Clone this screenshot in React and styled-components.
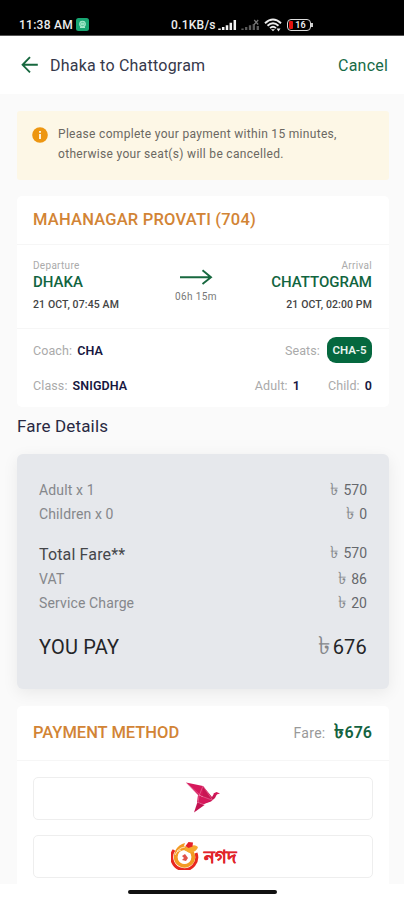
import styled, { createGlobalStyle } from 'styled-components'
import React from 'react'

const App = () => {
  return (
    <Screen>
      <GlobalStyle />
      <StatusBar>
        <Clock>11:38 AM</Clock>
        <AppBadge viewBox="0 0 13 13">
          <rect width="13" height="13" rx="2.5" fill="#18a572" />
          <circle cx="6.5" cy="6" r="2.8" fill="#5cc79d" stroke="#a5e8cb" strokeWidth="1.1" />
          <path d="M4 9.5h5M5 5l3 2M8 5L5 7" stroke="#a5e8cb" strokeWidth="1" />
        </AppBadge>
        <Speed>0.1KB/s</Speed>
        <Signal viewBox="0 0 19 12">
          <path d="M1.5 11v-1.5M5.2 11v-3M9 11V6.3M12.8 11V3.8M16.8 11V1" stroke="#f4f4f4" strokeWidth="2.5" />
        </Signal>
        <Signal $gap="4px" viewBox="0 0 19 12">
          <path d="M1.5 11v-1.5M5.2 11v-3M9 11V6.3M12.8 11V5M16.8 11V7" stroke="#5c5c5c" strokeWidth="2.3" />
          <path d="M13.2 1l4 4.5M17.2 1l-4 4.5" stroke="#777" strokeWidth="1.2" />
        </Signal>
        <Wifi viewBox="0 0 18 14">
          <path d="M1 5.2Q9-2.2 17 5.2M3.5 7.7q5.5-4.8 11 0M6 10.1q3-2.6 6 0" fill="none" stroke="#ececec" strokeWidth="1.9" />
          <path d="M7 11.200h4l-2 2zM12.500 10.500h4l-2 3z" fill="#ececec" />
        </Wifi>
        <Battery>
          <BatteryLevel />
          16
        </Battery>
        <BatteryTip />
      </StatusBar>

      <Header>
        <BackArrow viewBox="0 0 18 18">
          <path d="M16.8 8.8H2M9 1.2L1.6 8.8 9 16.300" />
        </BackArrow>
        <Route>Dhaka to Chattogram</Route>
        <Cancel>Cancel</Cancel>
      </Header>

      <Body>
        <Notice>
          <InfoIcon viewBox="0 0 16 16">
            <circle cx="8" cy="8" r="7.8" fill="#ed9611" />
            <path d="M8 7v5M8 4v1.7" stroke="#fff" strokeWidth="1.7" />
          </InfoIcon>
          <NoticeText>
            Please complete your payment within 15 minutes,
            <br />
            otherwise your seat(s) will be cancelled.
          </NoticeText>
        </Notice>

        <TicketCard>
          <CardHead $height="49px">
            <CardTitle $ls="0.21px">MAHANAGAR PROVATI (704)</CardTitle>
          </CardHead>
          <Journey>
            <Stop>
              <StopLabel>Departure</StopLabel>
              <City>DHAKA</City>
              <StopTime>21 OCT, 07:45 AM</StopTime>
            </Stop>
            <Duration>
              <LongArrow viewBox="0 0 34 16">
                <path d="M1 8.3h31M23.500 1.2l8.500 7.100-8.500 6.700" />
              </LongArrow>
              06h 15m
            </Duration>
            <Stop $right>
              <StopLabel>Arrival</StopLabel>
              <City>CHATTOGRAM</City>
              <StopTime>21 OCT, 02:00 PM</StopTime>
            </Stop>
          </Journey>
          <Details>
            <DetailRow $height="36px">
              <Detail>Coach: <b>CHA</b></Detail>
              <Detail>Seats: <Seat>CHA-5</Seat></Detail>
            </DetailRow>
            <DetailRow $height="34px">
              <Detail>Class: <b>SNIGDHA</b></Detail>
              <Passengers>
                <Detail>Adult: <b>1</b></Detail>
                <Detail>Child: <b>0</b></Detail>
              </Passengers>
            </DetailRow>
          </Details>
        </TicketCard>

        <SectionTitle>Fare Details</SectionTitle>

        <FareBox>
          <FareRow>
            <FareLabel>Adult x 1</FareLabel>
            <Amount><Taka>৳</Taka>570</Amount>
          </FareRow>
          <FareRow>
            <FareLabel>Children x 0</FareLabel>
            <Amount><Taka>৳</Taka>0</Amount>
          </FareRow>
          <FareRow $top="15px" $height="26px">
            <TotalLabel>Total Fare**</TotalLabel>
            <Amount $lift><Taka>৳</Taka>570</Amount>
          </FareRow>
          <FareRow>
            <FareLabel>VAT</FareLabel>
            <Amount><Taka>৳</Taka>86</Amount>
          </FareRow>
          <FareRow>
            <FareLabel>Service Charge</FareLabel>
            <Amount><Taka>৳</Taka>20</Amount>
          </FareRow>
          <FareRow $top="17px" $height="30px">
            <PayLabel>YOU PAY</PayLabel>
            <PayLabel><Taka $size="25px" $gap="2px">৳</Taka>676</PayLabel>
          </FareRow>
        </FareBox>

        <PaymentCard>
          <CardHead $height="55px">
            <CardTitle>PAYMENT METHOD</CardTitle>
            <PayFare>
              Fare:
              <PayTotal><Taka $bold $size="20px" $gap="1px">৳</Taka>676</PayTotal>
            </PayFare>
          </CardHead>
          <Methods>
            <Method>
              <BkashLogo viewBox="0 0 34 31">
                <path fill="#d6185b" d="M0 .5L17 4l9.500 13.500L12 13z" />
                <path fill="#c91553" d="M17 4l9 11 2-3.500 3.500-.5-2.500 5-4 3.500-8.500 3z" />
                <path fill="#d6185b" d="M12 13l14 5-9.500 4.500L11 20z" />
                <path fill="#d6185b" d="M27.500 11.500l3-1.500 3.500 1.500-5 1.500z" />
                <path fill="#c21150" d="M11.500 20l7 3L8 30.500z" />
                <path d="M0 .5L15 14l11 4M17 4l-4 10-1 6.500 7 2.500M17 4l9.500 14" fill="none" stroke="#f3a6c2" strokeWidth=".4" />
              </BkashLogo>
            </Method>
            <Method>
              <NagadMark viewBox="0 0 28 28">
                <path d="M3 8a12.500 12.500 0 1 0 22 3" fill="none" stroke="#e8281f" strokeWidth="3" />
                <circle cx="13.500" cy="15" r="8.800" fill="none" stroke="#f39a24" strokeWidth="3.800" />
                <path d="M4 9Q8 2 14 1q-2 4-1 7-5 0-8 4z" fill="#f39a24" />
                <path d="M13 8q4-6 7-4 4-2 7 1-1 5-9 6z" fill="#f6a92e" />
                <path d="M14.500 4l3-4 4.500.5-.5 4-4 1.500z" fill="#e5202a" />
                <path d="M6 9q4-4 8-4M4 13q1-4 6-5" fill="none" stroke="#fff3dc" strokeWidth=".8" />
                <circle cx="13.500" cy="15.500" r="6.200" fill="#fff" />
                <path d="M11 14l3-2 3 4-2 3-4-1 2-2z" fill="#e0524a" />
              </NagadMark>
              <NagadName>নগদ</NagadName>
            </Method>
          </Methods>
        </PaymentCard>
      </Body>

      <NavBar>
        <HomePill />
      </NavBar>
    </Screen>
  )
}

const GlobalStyle = createGlobalStyle`
  * {
    box-sizing: border-box;
  }
  body {
    margin: 0;
    background: #fff;
    font-family: Roboto, "Noto Sans", sans-serif;
  }
  b {
    font-weight: 600;
  }
  svg {
    display: block;
    flex: none;
  }
`

const Screen = styled.div`
  display: flex;
  flex-direction: column;
  width: 404px;
  height: 900px;
  overflow: hidden;
  white-space: nowrap;
`

const StatusBar = styled.div`
  display: flex;
  align-items: center;
  height: 36px;
  flex: none;
  padding: 14px 0 0 19px;
  background: #000;
  border-bottom: 1px solid #555;
  color: #eee;
`

const Clock = styled.div`
  width: 57px;
  font-size: 12px;
  font-weight: 500;
  letter-spacing: 0.25px;
`

const AppBadge = styled.svg`
  width: 13px;
  height: 13px;
`

const Speed = styled.div`
  width: 47px;
  margin-left: 82px;
  font-size: 12px;
  font-weight: 500;
  letter-spacing: 0.25px;
`

const Signal = styled.svg`
  width: 19px;
  height: 12px;
  margin-left: ${props => props.$gap || '0'};
`

const Wifi = styled.svg`
  width: 18px;
  height: 14px;
  margin-left: 4px;
`

const Battery = styled.div`
  position: relative;
  width: 24px;
  height: 12px;
  margin-left: 5px;
  padding-left: 3px;
  border: 1.5px solid #ddd;
  border-radius: 4px;
  font-size: 9px;
  line-height: 10px;
  font-weight: 600;
  text-align: center;
`

const BatteryLevel = styled.div`
  position: absolute;
  left: 1px;
  top: 1px;
  width: 4px;
  height: 8px;
  border-radius: 1px;
  background: #e3130f;
`

const BatteryTip = styled.div`
  width: 2px;
  height: 4px;
  background: #ccc;
`

const Header = styled.header`
  display: flex;
  align-items: center;
  height: 58px;
  flex: none;
  padding: 0 16px 0 21px;
  background: #fff;
`

const BackArrow = styled.svg`
  width: 18px;
  height: 18px;
  fill: none;
  stroke: #17683f;
  stroke-width: 1.9;
`

const Route = styled.div`
  flex: 1;
  margin-left: 11px;
  font-size: 16px;
  letter-spacing: 0.22px;
  color: #35384a;
`

const Cancel = styled.div`
  font-size: 16px;
  letter-spacing: 0.2px;
  color: #176b47;
`

const Body = styled.main`
  height: 790px;
  flex: none;
  padding: 17px 15px 0 17px;
  background: #fafafa;
  overflow: hidden;
`

const Notice = styled.div`
  display: flex;
  height: 69px;
  padding: 13px 15px;
  border-radius: 3px;
  background: #fdf7e6;
`

const InfoIcon = styled.svg`
  width: 16px;
  height: 16px;
  margin-top: 3px;
`

const NoticeText = styled.div`
  margin-left: 10px;
  font-size: 12px;
  line-height: 20px;
  letter-spacing: 0.31px;
  color: #6b6862;
`

const TicketCard = styled.section`
  height: 211px;
  margin-top: 16px;
  border-radius: 5px;
  background: #fff;
`

const CardHead = styled.div`
  display: flex;
  align-items: center;
  justify-content: space-between;
  height: ${props => props.$height};
  padding: 0 17px 1px 16px;
  border-bottom: 1px solid #f6f6f6;
`

const CardTitle = styled.h2`
  margin: 0;
  font-size: 16.5px;
  font-weight: 500;
  letter-spacing: ${props => props.$ls || '0'};
  color: #d28435;
`

const Journey = styled.div`
  display: flex;
  justify-content: space-between;
  height: 84px;
  padding: 14px 17px 0 16px;
  border-bottom: 1px solid #f6f6f6;
`

const Stop = styled.div`
  width: 120px;
  text-align: ${props => (props.$right ? 'right' : 'left')};
`

const StopLabel = styled.div`
  font-size: 10px;
  line-height: 14px;
  letter-spacing: 0.3px;
  color: #aaa;
`

const City = styled.div`
  font-size: 15px;
  line-height: 18px;
  font-weight: 500;
  color: #11653f;
`

const StopTime = styled.div`
  margin-top: 7px;
  font-size: 10.5px;
  line-height: 14px;
  font-weight: 500;
  letter-spacing: 0.12px;
  color: #444;
`

const Duration = styled.div`
  display: flex;
  flex-direction: column;
  align-items: center;
  margin-right: 13px;
  padding-top: 10px;
  font-size: 10px;
  line-height: 12px;
  letter-spacing: 0.4px;
  color: #777;
`

const LongArrow = styled.svg`
  width: 34px;
  height: 16px;
  margin-bottom: 6px;
  fill: none;
  stroke: #17683f;
  stroke-width: 1.9;
`

const Details = styled.div`
  padding: 3px 17px 0 16px;
`

const DetailRow = styled.div`
  display: flex;
  align-items: center;
  justify-content: space-between;
  height: ${props => props.$height};
`

const Detail = styled.div`
  display: flex;
  align-items: center;
  gap: 5px;
  font-size: 12.5px;
  letter-spacing: 0.1px;
  color: #aaa;

  b {
    color: #17173f;
  }
`

const Passengers = styled.div`
  display: flex;
  gap: 28px;
`

const Seat = styled.div`
  width: 45px;
  height: 26px;
  margin-left: 2px;
  border-radius: 9px;
  background: #05683f;
  color: #e8f5ee;
  font-size: 11.5px;
  font-weight: 600;
  line-height: 26px;
  letter-spacing: 0;
  text-align: center;
`

const SectionTitle = styled.h3`
  margin: 9px 0 18px;
  font-size: 17px;
  font-weight: 400;
  line-height: 20px;
  letter-spacing: 0.16px;
  color: #292942;
`

const FareBox = styled.section`
  height: 235px;
  padding: 24px 22px 0;
  border-radius: 6px;
  background: #e6e8ec;
  box-shadow: 0 4px 16px rgba(0, 0, 0, 0.07);
`

const FareRow = styled.div`
  display: flex;
  align-items: center;
  justify-content: space-between;
  height: ${props => props.$height || '24px'};
  margin-top: ${props => props.$top || '0'};
`

const FareLabel = styled.div`
  font-size: 14px;
  letter-spacing: 0.13px;
  color: #85878b;
`

const Amount = styled.div`
  display: flex;
  align-items: baseline;
  margin-bottom: ${props => (props.$lift ? '3px' : '0')};
  font-size: 14px;
  line-height: 18px;
  color: #66686c;
`

const Taka = styled.span`
  margin-right: ${props => props.$gap || '5px'};
  font-size: ${props => props.$size || '17px'};
  line-height: 1px;
  color: ${props => (props.$bold ? 'inherit' : '#85878b')};
`

const TotalLabel = styled.div`
  font-size: 16px;
  letter-spacing: 0.15px;
  color: #444649;
`

const PayLabel = styled.div`
  display: flex;
  align-items: baseline;
  font-size: 20px;
  line-height: 24px;
  letter-spacing: 0.2px;
  color: #242528;
`

const PaymentCard = styled.section`
  height: 190px;
  margin-top: 17px;
  border-radius: 5px 5px 0 0;
  background: #fff;
`

const PayFare = styled.div`
  display: flex;
  align-items: baseline;
  gap: 8px;
  font-size: 14px;
  line-height: 20px;
  letter-spacing: 0.3px;
  color: #999;
`

const PayTotal = styled.div`
  display: flex;
  align-items: baseline;
  font-size: 16px;
  font-weight: 600;
  letter-spacing: 0;
  color: #14633f;
`

const Methods = styled.div`
  display: flex;
  flex-direction: column;
  gap: 15px;
  padding: 16px 16px 0;
`

const Method = styled.div`
  display: flex;
  align-items: center;
  justify-content: center;
  height: 43px;
  padding-bottom: 2px;
  border: 1px solid #eee;
  border-radius: 5px;
`

const BkashLogo = styled.svg`
  width: 34px;
  height: 31px;
`

const NagadMark = styled.svg`
  width: 28px;
  height: 28px;
`

const NagadName = styled.div`
  margin: 3px 0 0 5px;
  font-size: 18px;
  font-weight: 700;
  line-height: 20px;
  color: #e2242b;
  -webkit-text-stroke: 0.3px #e2242b;
`

const NavBar = styled.footer`
  height: 16px;
  flex: none;
  padding-top: 6px;
  background: #fff;
`

const HomePill = styled.div`
  width: 149px;
  height: 4px;
  margin-left: 128px;
  border-radius: 2px;
  background: #111;
`

export default App
